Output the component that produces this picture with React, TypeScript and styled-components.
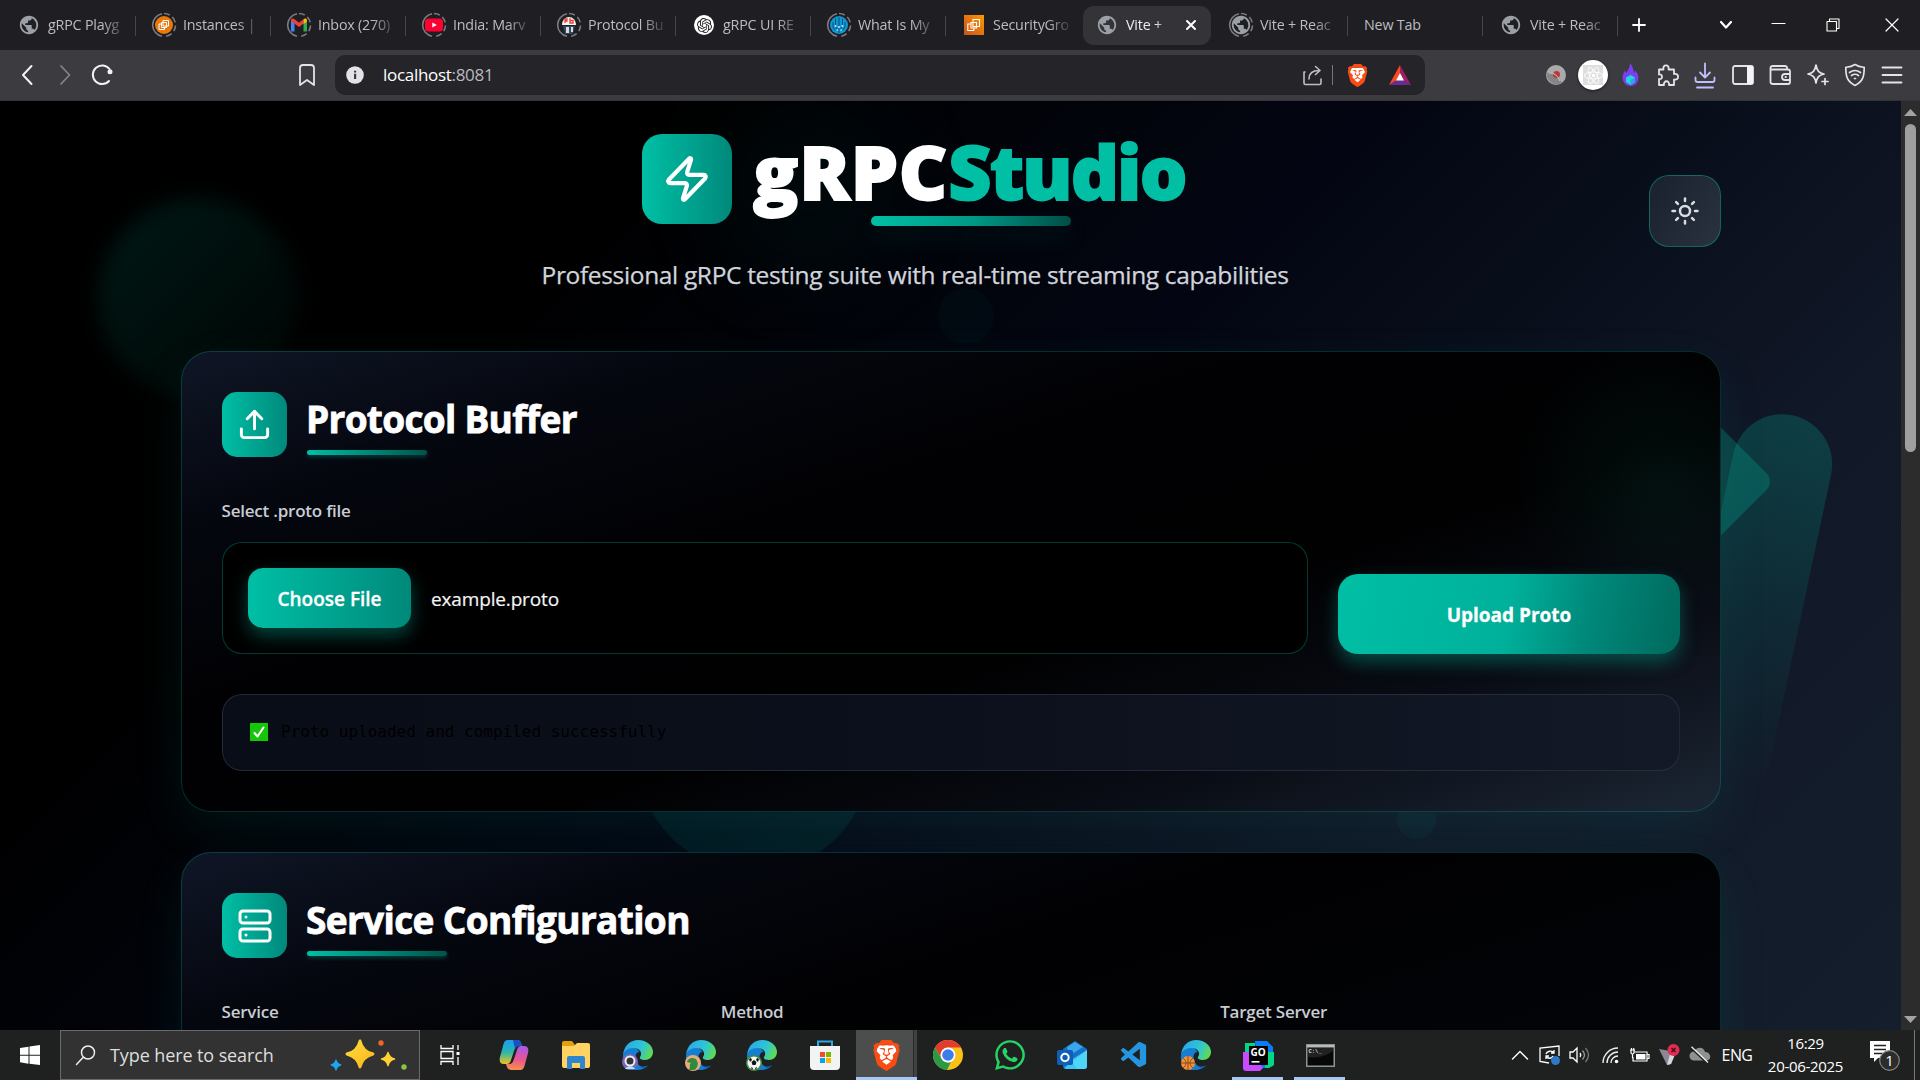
import React from "react";
import styled, { createGlobalStyle, css } from "styled-components";
import { Zap, Upload, Server, Sun } from "lucide-react";
import { SiBrave, SiOpenai } from "react-icons/si";
import { FaReact, FaWhatsapp } from "react-icons/fa";
import { MdPublic } from "react-icons/md";
import { VscVscode } from "react-icons/vsc";

const ui = `"Segoe UI", "Open Sans", "Noto Sans", sans-serif`;

const Global = createGlobalStyle`
  *, *::before, *::after { box-sizing: border-box; }
  body { margin: 0; background: #000; font-family: ${ui}; }
  svg { display: block; flex: none; }
`;

const Screen = styled.div`
  width: 1920px;
  height: 1080px;
  display: flex;
  flex-direction: column;
  overflow: hidden;
`;

/* ---------- browser chrome ---------- */

const TabStrip = styled.div`
  height: 50px;
  flex: none;
  display: flex;
  align-items: center;
  background: #1f1e23;
  padding-left: 1px;
`;

const Tab = styled.div<{ $active?: boolean; $line?: boolean }>`
  width: 135px;
  flex: none;
  height: 39px;
  display: flex;
  align-items: center;
  padding-left: ${(p) => (p.$active ? 11 : 15)}px;
  position: relative;
  ${(p) =>
    p.$active &&
    css`
      width: 128px;
      margin: 0 2px 0 2px;
      background: #343338;
      border-radius: 11px;
    `}
  ${(p) =>
    p.$line &&
    css`
      &::after {
        content: "";
        position: absolute;
        right: 0;
        top: 10px;
        width: 1px;
        height: 20px;
        background: #46454b;
      }
    `}
`;

const TabIcon = styled.span`
  width: 26px;
  height: 26px;
  display: grid;
  place-items: center;
  flex: none;
`;

const TabLabel = styled.span<{ $active?: boolean; $full?: boolean }>`
  width: ${(p) => (p.$active ? 44 : 80)}px;
  flex: none;
  margin-left: ${(p) => (p.$full ? 1 : 6)}px;
  white-space: nowrap;
  font-size: 14.3px;
  letter-spacing: -0.2px;
  line-height: 24px;
  color: ${(p) => (p.$active ? "#ededf0" : "#bdbcc2")};
  ${(p) =>
    !p.$full &&
    css`
      mask-image: linear-gradient(90deg, #000 68%, rgba(0, 0, 0, 0.15) 96%);
    `}
`;

const CloseBox = styled.span`
  margin-left: 15px;
`;

const WindowButtons = styled.div`
  flex: 1;
  height: 50px;
  display: flex;
  align-items: center;
  & > :first-child {
    margin-right: auto;
  }
`;

const WinBtn = styled.span<{ $w: number }>`
  width: ${(p) => p.$w}px;
  flex: none;
  display: flex;
  justify-content: center;
`;

const Toolbar = styled.div`
  height: 51px;
  flex: none;
  display: flex;
  align-items: center;
  background: #3c3b40;
  border-bottom: 1px solid #343338;
`;

const NavGroup = styled.div`
  width: 335px;
  display: flex;
  align-items: center;
  padding-left: 14px;
`;

const NavSlot = styled.span<{ $w: number; $push?: number }>`
  width: ${(p) => p.$w}px;
  margin-left: ${(p) => p.$push ?? 0}px;
  display: flex;
  justify-content: center;
`;

const AddressBar = styled.div`
  width: 1090px;
  height: 40px;
  border-radius: 10px;
  background: #252429;
  display: flex;
  align-items: center;
  padding: 0 13px 0 11px;
`;

const Url = styled.span`
  margin-left: 19px;
  flex: 1;
  font-size: 17px;
  letter-spacing: -0.3px;
  line-height: 24px;
  color: #b9b9bf;
  b {
    font-weight: 400;
    color: #fff;
  }
`;

const BarDivider = styled.span`
  width: 1px;
  height: 20px;
  background: #77767c;
  margin: 0 13px 0 8px;
`;

const Extensions = styled.div`
  flex: 1;
  display: flex;
  align-items: center;
  justify-content: flex-end;
  padding-right: 9px;
`;

const ExtSlot = styled.span`
  width: 37.4px;
  display: grid;
  place-items: center;
`;

const ReactBadge = styled.span`
  width: 30px;
  height: 30px;
  border-radius: 50%;
  background: #fff;
  display: grid;
  place-items: center;
  box-shadow: 0 1px 3px #0008;
`;

const ReactTile = styled.span`
  display: grid;
  place-items: center;
  width: 20px;
  height: 20px;
  background: #dedede;
`;

/* ---------- page ---------- */

const Viewport = styled.div`
  height: 929px;
  flex: none;
  display: flex;
`;

const Page = styled.main`
  width: 1901px;
  height: 929px;
  position: relative;
  overflow: hidden;
  background: linear-gradient(135deg, #000 0%, #000 24%, #030612 49%, #111827 76%, #141e2d 100%);
`;

const Shape = styled.div<{ $x: number; $y: number; $w: number; $h?: number }>`
  position: absolute;
  left: ${(p) => p.$x}px;
  top: ${(p) => p.$y}px;
  width: ${(p) => p.$w}px;
  height: ${(p) => p.$h ?? p.$w}px;
`;

const BlurOrb = styled(Shape)`
  border-radius: 50%;
  background: linear-gradient(135deg, rgba(0, 191, 165, 0.13), rgba(0, 137, 100, 0.03));
  filter: blur(10px);
`;

const Orb = styled(Shape)<{ $a: number }>`
  border-radius: 50%;
  background: rgba(0, 191, 165, ${(p) => p.$a});
`;

const Diamond = styled(Shape)`
  border-radius: 12px;
  transform: rotate(45deg);
  background: rgba(0, 191, 165, 0.25);
`;

const Pill = styled(Shape)`
  border-radius: 50px;
  transform: rotate(12deg);
  background: linear-gradient(180deg, rgba(0, 191, 165, 0.23), rgba(0, 137, 123, 0.15) 50%, rgba(0, 137, 123, 0) 92%);
`;

const Content = styled.div`
  position: relative;
  width: 1540px;
  margin-left: 181px;
`;

const Header = styled.header`
  height: 250px;
  display: flex;
  padding-top: 33px;
`;

const Hero = styled.div`
  flex: 1;
  display: flex;
  flex-direction: column;
  align-items: center;
`;

const Brand = styled.div`
  display: flex;
  gap: 20px;
`;

const IconTile = styled.div<{ $s: number; $r: number; $glow?: boolean }>`
  width: ${(p) => p.$s}px;
  height: ${(p) => p.$s}px;
  flex: none;
  border-radius: ${(p) => p.$r}px;
  background: linear-gradient(90deg, #00bfa5, #00897b);
  display: grid;
  place-items: center;
  color: #fff;
  ${(p) =>
    p.$glow &&
    css`
      box-shadow: 120px 10px 130px 30px rgba(0, 191, 165, 0.07);
    `}
`;

const Title = styled.h1`
  margin: 0;
  width: 436px;
  height: 92px;
  padding-left: 1px;
  font-size: 75px;
  font-weight: 800;
  line-height: 74px;
  letter-spacing: 0.75px;
  -webkit-text-stroke: 1.8px currentColor;
  color: #fff;
  white-space: nowrap;
  span {
    color: #00bfa5;
    letter-spacing: -1.85px;
  }
  &::after {
    content: "";
    display: block;
    width: 200px;
    height: 10px;
    margin: 8px auto 0;
    border-radius: 5px;
    background: linear-gradient(90deg, #00bfa5, #009a87 50%, #004d45);
    box-shadow: 0 12px 25px rgba(0, 191, 165, 0.12);
  }
`;

const Tagline = styled.p`
  margin: 31px 0 0;
  font-size: 24.5px;
  line-height: 36px;
  letter-spacing: -0.35px;
  -webkit-text-stroke: 0.25px currentColor;
  color: #d1d5db;
  white-space: nowrap;
`;

const ThemeToggle = styled.button`
  width: 72px;
  height: 72px;
  margin-top: 41px;
  padding: 0;
  border-radius: 20px;
  border: 1px solid rgba(0, 191, 165, 0.4);
  background: linear-gradient(120deg, #19212f, #2a3240);
  color: #d9dde3;
  display: grid;
  place-items: center;
`;

const Card = styled.section<{ $h: number; $glow?: boolean }>`
  height: ${(p) => p.$h}px;
  margin-bottom: 40px;
  padding: 40px;
  border: 1px solid rgba(0, 191, 165, 0.24);
  border-radius: 30px;
  background: ${(p) =>
    p.$glow
      ? "radial-gradient(circle at 1475px 130px, rgba(0, 120, 90, 0.11), transparent 140px), linear-gradient(162deg, #0f1626 0%, #05070f 18%, #010103 38%, #010102 60%, #090c14 78%, #1c2634 100%)"
      : "linear-gradient(162deg, #0f1626 0%, #05070f 18%, #010103 38%, #020306 60%, #05080f 100%)"};
  background-origin: border-box;
  box-shadow: 0 18px 50px rgba(0, 191, 165, 0.09);
`;

const CardHead = styled.div`
  display: flex;
  gap: 20px;
  height: 65px;
`;

const CardTitle = styled.h2<{ $bar: number; $ls: number }>`
  margin: 0;
  font-size: 37px;
  font-weight: 700;
  line-height: 50px;
  padding-top: 2px;
  color: #fff;
  white-space: nowrap;
  span {
    display: block;
    margin-left: -1px;
    letter-spacing: ${(p) => p.$ls}px;
    -webkit-text-stroke: 0.8px currentColor;
  }
  &::after {
    content: "";
    display: block;
    width: ${(p) => p.$bar}px;
    height: 5px;
    margin-top: 6px;
    border-radius: 3px;
    background: linear-gradient(90deg, #00bfa5, #00544b);
    box-shadow: 0 2px 4px rgba(0, 191, 165, 0.3);
  }
`;

const Label = styled.label`
  display: block;
  font-size: 17px;
  font-weight: 600;
  line-height: 26px;
  letter-spacing: -0.22px;
  margin-left: -0.5px;
  padding-top: 1px;
  color: #c8ccd3;
`;

const UploadRow = styled.div`
  display: grid;
  grid-template-columns: 1086px 342px;
  gap: 30px;
  align-items: end;
  margin-top: 40px;
`;

const FileBox = styled.div`
  height: 112px;
  margin-top: 18px;
  padding: 0 25px;
  border: 1px solid rgba(0, 191, 165, 0.3);
  border-radius: 20px;
  background: rgba(0, 0, 0, 0.85);
  display: flex;
  align-items: center;
  gap: 20px;
`;

const Button = styled.button<{ $w: number; $h: number; $big?: boolean }>`
  width: ${(p) => p.$w}px;
  height: ${(p) => p.$h}px;
  padding: 2px 0 0;
  border: 0;
  border-radius: ${(p) => (p.$big ? 20 : 15)}px;
  font-family: ${ui};
  font-size: 19px;
  font-weight: ${(p) => (p.$big ? 700 : 600)};
  letter-spacing: 0;
  -webkit-text-stroke: 0.3px currentColor;
  color: #fff;
  background: ${(p) =>
    p.$big
      ? "linear-gradient(100deg, #00bfa5, #00b09a 50%, #00897b 72%, #00695c)"
      : "linear-gradient(90deg, #00bfa5, #00897b)"};
  box-shadow: 0 8px 18px rgba(0, 191, 165, 0.36);
`;

const FileName = styled.span`
  font-size: 19px;
  letter-spacing: -0.15px;
  padding-top: 1px;
  -webkit-text-stroke: 0.2px currentColor;
  color: #f3f4f6;
`;

const Result = styled.div`
  margin-top: 40px;
  height: 77px;
  padding: 0 0 2px 27px;
  display: flex;
  align-items: center;
  border: 1px solid rgba(55, 65, 81, 0.5);
  border-radius: 20px;
  background: linear-gradient(90deg, #090d17, #0c101c 50%, #131927);
  color: #000;
  font-family: Consolas, "DejaVu Sans Mono", monospace;
  font-size: 16px;
`;

const Check = styled.span`
  width: 20px;
  height: 20px;
  border: 1px solid #04140a;
  margin: 0 12px 0 -1px;
  background: #16c60c;
  display: grid;
  place-items: center;
`;

const Fields = styled.div`
  display: grid;
  grid-template-columns: repeat(3, 1fr);
  gap: 40px;
  margin-top: 40px;
`;

/* ---------- scrollbar ---------- */

const Scrollbar = styled.div`
  width: 19px;
  background: #2c2c2c;
  display: flex;
  flex-direction: column;
  align-items: center;
  justify-content: space-between;
  padding: 8px 0 7px;
`;

const Track = styled.div`
  flex: 1;
  width: 11px;
  padding-top: 8px;
`;

const Thumb = styled.div`
  height: 328px;
  border-radius: 5.5px;
  background: #9f9f9f;
`;

/* ---------- taskbar ---------- */

const Taskbar = styled.footer`
  height: 50px;
  flex: none;
  display: flex;
  background: #1f2121;
`;

const StartSlot = styled.div`
  width: 60px;
  display: grid;
  place-items: center;
`;

const SearchBox = styled.div`
  width: 360px;
  border: 1px solid #6a6a6a;
  background: #323232;
  display: flex;
  align-items: center;
  padding-left: 14px;
`;

const SearchText = styled.span`
  flex: 1;
  margin-left: 14px;
  font-size: 18px;
  letter-spacing: -0.1px;
  color: #dedede;
`;

const Apps = styled.div`
  display: flex;
`;

const AppSlot = styled.div<{ $w?: number; $active?: boolean; $open?: boolean }>`
  width: ${(p) => p.$w ?? 62}px;
  display: grid;
  place-items: center;
  position: relative;
  ${(p) =>
    p.$active &&
    css`
      background: linear-gradient(90deg, #4c4d4d 57px, #2a2b2b 57px, #2a2b2b 58px, #404141 58px);
    `}
  ${(p) =>
    (p.$active || p.$open) &&
    css`
      &::after {
        content: "";
        position: absolute;
        bottom: 0;
        left: ${p.$active ? 0 : 5}px;
        right: ${p.$active ? 0 : 6}px;
        height: 3px;
        background: #a8c7f5;
      }
    `}
`;

const Tray = styled.div`
  flex: 1;
  display: flex;
  align-items: center;
  justify-content: flex-end;
  color: #fff;
`;

const TraySlot = styled.span<{ $w: number }>`
  width: ${(p) => p.$w}px;
  display: grid;
  place-items: center;
`;

const Lang = styled.span`
  width: 44px;
  text-align: center;
  font-size: 16px;
  letter-spacing: -0.6px;
`;

const Clock = styled.div`
  width: 93px;
  margin-right: 10px;
  text-align: center;
  font-size: 15px;
  line-height: 23px;
  letter-spacing: -0.3px;
`;

const EndLine = styled.span`
  width: 1px;
  height: 50px;
  background: #777;
  margin: 0 5px 0 8px;
`;

/* ---------- drawings ---------- */

const Favicon = ({ kind }: { kind: string }) => {
  if (kind === "globe") return <MdPublic size={22} color="#9aa0a6" />;
  return (
    <svg width="18" height="18" viewBox="0 0 18 18">
      {kind === "aws" && (
        <>
          <circle cx="9" cy="9" r="9" fill="#e8790c" />
          <path d="M8 4.500h5.500V10H8zM6.500 6.500h5v5h-5zM6 8H4v5.500h5.500V12" fill="none" stroke="#fff" strokeWidth="1" />
        </>
      )}
      {kind === "gmail" && (
        <g>
          <path d="M1 4v11.500h3.500V7z" fill="#4285f4" />
          <path d="M17 4v11.500h-3.500V7z" fill="#34a853" />
          <path d="M1 4.500C1 2.500 3 2 4.500 3.200L9 6.800l4.500-3.600V7.500L9 11 1 5z" fill="#ea4335" />
          <path d="M13.500 3.200C15 2 17 2.500 17 4.500L16.500 6l-3 2z" fill="#fbbc04" />
        </g>
      )}
      {kind === "yt" && (
        <>
          <rect x="0" y="2.500" width="18" height="13" rx="3.500" fill="#ff0033" />
          <path d="m7.300 6.500 4.500 2.500-4.500 2.500z" fill="#fff" />
        </>
      )}
      {kind === "pb" && (
        <>
          <path d="M2 9a7 8 0 0 1 14 0z" fill="#f6f4f2" />
          <path d="M5 7V3h2v2H5M10 2v5h3V4.500h-3" stroke="#e2402c" strokeWidth="1.300" fill="none" />
          <path d="M3 10h12l-2 8H5z" fill="#34495e" />
          <path d="M6 11h3v6H6zM11 11h2v5h-2z" fill="#d5dbe0" />
        </>
      )}
      {kind === "ip" && (
        <>
          <circle cx="9" cy="9" r="9" fill="#1296cf" />
          <path d="M9 1v16M5.500 2.500v8l2 3M12.500 2.500v8l-2 3M3 6v5l2 3M15 6v5l-2 3" stroke="#0a4f86" strokeWidth="1" fill="none" />
          <g fill="#bff0ff">
            <circle cx="9" cy="11" r="1" />
            <circle cx="5.500" cy="10" r="1" />
            <circle cx="12.500" cy="10" r="1" />
            <circle cx="7.500" cy="14" r=".8" />
            <circle cx="11" cy="14" r=".8" />
          </g>
        </>
      )}
    </svg>
  );
};

const RingBox = styled.span`
  display: grid;
  place-items: center;
  & > * {
    grid-area: 1 / 1;
  }
`;

const Ring = ({ children }: { children: React.ReactNode }) => (
  <RingBox>
    <svg width="26" height="26" viewBox="0 0 26 26">
      <path d="M11 1.700a11.500 11.500 0 0 0 0 22.600" fill="none" stroke="#7c7b80" strokeWidth="1.600" />
      <path d="M13 1.500a11.500 11.500 0 0 1 0 23" fill="none" stroke="#7c7b80" strokeWidth="1.600" strokeDasharray="6 3.200" />
    </svg>
    {children}
  </RingBox>
);

const AwsSquare = () => (
  <svg width="20" height="20" viewBox="0 0 20 20">
    <defs>
      <linearGradient id="awsg" x1="0" y1="1" x2="1" y2="0">
        <stop stopColor="#c8511b" />
        <stop offset="1" stopColor="#f90" />
      </linearGradient>
    </defs>
    <path fill="url(#awsg)" d="M0 0h20v20H0z" />
    <path d="M9 4.500h6.500v7H9zM7 7.500h5.500v5.500H7zM7 9H3.800v6.500h6V13" fill="none" stroke="#fff" strokeWidth="1.100" />
  </svg>
);

const OpenAiBadge = styled.span`
  width: 20px;
  height: 20px;
  border-radius: 50%;
  background: #fff;
  color: #222;
  display: grid;
  place-items: center;
`;

const BraveMark = ({ size }: { size: number }) => (
  <RingBox>
    <svg width={size} height={size} viewBox="0 0 24 24">
      <path d="M5.500 4h13l1.500 5-2 9-6 4.500L6 18 4 9z" fill="#fff" />
    </svg>
    <SiBrave size={size} color="#fb4a12" />
  </RingBox>
);

const Edge = ({ badge }: { badge: "astro" | "dino" | "soccer" | "basket" }) => (
  <svg width="32" height="32" viewBox="0 0 32 32">
    <defs>
      <linearGradient id={"ea" + badge} x1="0" x2="1" y1="0.3" y2="0.6">
        <stop stopColor="#29a8ea" />
        <stop offset=".6" stopColor="#2fc6d3" />
        <stop offset="1" stopColor="#62db4c" />
      </linearGradient>
    </defs>
    <path d="M1 16A15 15 0 0 0 27 26c-8 4-14-1-14-7 0-4 3-6 5-6C13 7 2 9 1 16z" fill="#1260b4" />
    <path d="M1 17C2 8 13 6 17 12c-4 1-5 8-1 13 2 3 4 4 6 4C10 35 0 27 1 17z" fill="#147fd2" />
    <path d="M1 16C2 6 9 1 16 1c9 0 15 6 15 12 0 5-4 8-8 8-3 0-6-1-5-3 3-4 0-9-7-9-5 0-9 3-10 7z" fill={`url(#ea${badge})`} />
    {badge === "astro" && (
      <>
        <circle cx="8" cy="23" r="8" fill="#7a63b8" />
        <path d="M3 30a6 6 0 0 1 10 0z" fill="#b5e8f4" />
        <circle cx="8" cy="22" r="4.500" fill="#333" stroke="#e8eef4" strokeWidth="2" />
      </>
    )}
    {badge === "dino" && (
      <>
        <circle cx="8" cy="24" r="8" fill="#e9ab80" />
        <path d="M3 31c4-2 0-5 3-7l-4-1c1-5 9-5 10-1 2 3 0 8-3 9z" fill="#2f8a3c" />
      </>
    )}
    {badge === "soccer" && (
      <>
        <circle cx="8" cy="24" r="8" fill="#3d8a43" />
        <circle cx="8" cy="24" r="6.500" fill="#f4f4f4" />
        <path d="m8 21 2.500 2-1 3h-3l-1-3zM3 20l2-1 1 2-2 2zM13 20l-2-1-1 2 2 2zM5 28l2 1-1 2zM11 28l-2 1 1 2z" fill="#111" />
      </>
    )}
    {badge === "basket" && (
      <>
        <circle cx="8" cy="24" r="7" fill="#ee9140" />
        <path d="M1 24h14M8 17v14M3 19c4 3 4 7 0 10M13 19c-4 3-4 7 0 10" stroke="#8d4a15" fill="none" />
      </>
    )}
  </svg>
);

const Star = ({ cx, cy, r, fill }: { cx: number; cy: number; r: number; fill: string }) => (
  <path
    d={`M${cx} ${cy - r}q${r * 0.2} ${r * 0.8} ${r} ${r}q${-r * 0.8} ${r * 0.2} ${-r} ${r}q${-r * 0.2} ${-r * 0.8} ${-r} ${-r}q${r * 0.8} ${-r * 0.2} ${r} ${-r}z`}
    fill={fill}
    stroke={fill}
    strokeWidth={r * 0.22}
    strokeLinejoin="round"
  />
);

const Line = ({ d, w = 22, h = 22, s = 1.8, c = "#e4e4e8" }: { d: string; w?: number; h?: number; s?: number; c?: string }) => (
  <svg width={w} height={h} viewBox={`0 0 ${w} ${h}`} fill="none" stroke={c} strokeWidth={s} strokeLinecap="round" strokeLinejoin="round">
    <path d={d} />
  </svg>
);

const CopilotIcon = () => (
  <svg width="30" height="30" viewBox="0 0 30 30">
    <defs>
      <linearGradient id="cp1" x1="0" y1="0" x2="0" y2="1">
        <stop stopColor="#1c9df0" />
        <stop offset=".5" stopColor="#28b5b0" />
        <stop offset="1" stopColor="#f1c41b" />
      </linearGradient>
      <linearGradient id="cp2" x1="0.5" y1="0" x2="0.4" y2="1">
        <stop stopColor="#a65ae8" />
        <stop offset=".55" stopColor="#e9568e" />
        <stop offset="1" stopColor="#f9904a" />
      </linearGradient>
    </defs>
    <path d="M9 0h9c3 0 4 2 5 6h-3c-3 0-4 2-5 5l-3 9c-1 3-2 4-4 4H5c-4 0-5-3-4-7l3-11C5 2 6 0 9 0z" fill="url(#cp1)" />
    <path d="M14 0h4c3 0 4 2 5 6h-3c-2 0-3 1-4 3z" fill="#1b4fc4" />
    <path d="M21 30h-9c-3 0-4-2-5-6h3c3 0 4-2 5-5l3-9c1-3 2-4 4-4h3c4 0 5 3 4 7l-3 11c-1 4-2 6-5 6z" fill="url(#cp2)" />
  </svg>
);

const ExplorerIcon = () => (
  <svg width="28" height="28" viewBox="0 0 28 28">
    <path d="M0 2q0-2 2-2h8l3 4v6H0z" fill="#e3a008" />
    <path d="M0 5h12l3-3h11q2 0 2 2v21q0 2-2 2H2q-2 0-2-2z" fill="#ffd262" />
    <path d="M5 28V17q0-2 2-2h14q2 0 2 2v11h-5v-6h-8v6z" fill="#2f86d0" />
  </svg>
);

const StoreIcon = () => (
  <svg width="30" height="32" viewBox="0 0 30 32">
    <path d="M8 7V2.500h14V7" fill="none" stroke="#2aa8e0" strokeWidth="2" />
    <path d="M0 7h30v20q0 4-4 4H4q-4 0-4-4z" fill="#f3f3f3" />
    <path d="M10 13h5v5h-5z" fill="#f04e23" />
    <path d="M16 13h5v5h-5z" fill="#7db700" />
    <path d="M10 19h5v5h-5z" fill="#00a3ee" />
    <path d="M16 19h5v5h-5z" fill="#fdb900" />
  </svg>
);

const ChromeIcon = () => (
  <svg width="30" height="30" viewBox="0 0 30 30">
    <circle cx="15" cy="15" r="15" fill="#fbc116" />
    <path d="M2 7.500A15 15 0 0 1 28 7.500H15A7.500 7.500 0 0 0 8.500 18.700z" fill="#e33b2e" />
    <path d="M2 7.500 8.500 18.700A7.500 7.500 0 0 0 18 21.900L14 30A15 15 0 0 1 2 7.500z" fill="#2a9a49" />
    <circle cx="15" cy="15" r="7.500" fill="#fff" />
    <circle cx="15" cy="15" r="5.800" fill="#3b7ded" />
  </svg>
);

const OutlookIcon = () => (
  <svg width="30" height="28" viewBox="0 0 30 28">
    <path d="M6 8 18 0l12 8v17q0 3-3 3H9q-3 0-3-3z" fill="#1470c8" />
    <path d="M10 6 18 1l8 5-14 9z" fill="#3ba6ea" />
    <path d="M30 9v16q0 3-3 3H9l-2-1z" fill="#3cc8f4" />
    <path d="M30 9 14 19l6 9h7q3 0 3-3z" fill="#52dcfa" opacity=".7" />
    <rect y="9" width="16" height="15" rx="2" fill="#0f5fb8" />
    <circle cx="8" cy="16.500" r="3.700" fill="none" stroke="#fff" strokeWidth="2" />
  </svg>
);

const GoText = styled.text`
  font: 700 10px "Open Sans", sans-serif;
  fill: #fff;
`;

const GolandIcon = () => (
  <svg width="31" height="31" viewBox="0 0 31 31">
    <path d="M2 3h10v10H2z" fill="#00d886" />
    <path d="M12 1h12l6 6v18l-4 3H14z" fill="#087cfa" />
    <path d="M24 12h7v13l-5 3h-4z" fill="#00d886" />
    <path d="M0 12h8l12 16-3 3H3q-3 0-3-3z" fill="#c94bff" />
    <path d="M6 6h19v19H6z" fill="#000" />
    <GoText x="7.5" y="15.5">GO</GoText>
    <path d="M8.500 21h8v1.600h-8z" fill="#fff" />
  </svg>
);

const CmdText = styled.text`
  font: 700 5.5px "Liberation Mono", monospace;
  fill: #ddd;
`;

const CmdIcon = () => (
  <svg width="29" height="23" viewBox="0 0 29 23">
    <path d="M.75.75h27.500v21.500H.75z" fill="#070707" stroke="#8d9296" strokeWidth="1.500" />
    <path d="M1 1h27v2.500H1z" fill="#b6babd" />
    <path d="M2 13q14 2 25-6V4H2z" fill="#333" opacity=".6" />
    <CmdText x="2.5" y="9">C:\_</CmdText>
  </svg>
);

const tabs: { icon: React.ReactNode; label: string; active?: boolean; line?: boolean }[] = [
  { icon: <Favicon kind="globe" />, label: "gRPC Playg", line: true },
  { icon: <Ring><Favicon kind="aws" /></Ring>, label: "Instances |", line: true },
  { icon: <Ring><Favicon kind="gmail" /></Ring>, label: "Inbox (270)", line: true },
  { icon: <Ring><Favicon kind="yt" /></Ring>, label: "India: Marv", line: true },
  { icon: <Ring><Favicon kind="pb" /></Ring>, label: "Protocol Bu", line: true },
  { icon: <OpenAiBadge><SiOpenai size={15} /></OpenAiBadge>, label: "gRPC UI RE", line: true },
  { icon: <Ring><Favicon kind="ip" /></Ring>, label: "What Is My", line: true },
  { icon: <AwsSquare />, label: "SecurityGro" },
  { icon: <Favicon kind="globe" />, label: "Vite +", active: true },
  { icon: <Ring><Favicon kind="globe" /></Ring>, label: "Vite + Reac", line: true },
  { icon: null, label: "New Tab", line: true },
  { icon: <Favicon kind="globe" />, label: "Vite + Reac", line: true },
];

const BrowserTabs = () => (
  <TabStrip>
    {tabs.map((t, i) => (
      <Tab key={i} $active={t.active} $line={t.line}>
        {t.icon && <TabIcon>{t.icon}</TabIcon>}
        <TabLabel $active={t.active} $full={!t.icon}>
          {t.label}
        </TabLabel>
        {t.active && (
          <CloseBox>
            <Line w={12} h={12} d="M2 2l8 8M10 2l-8 8" s={2} c="#fff" />
          </CloseBox>
        )}
      </Tab>
    ))}
    <WindowButtons>
      <WinBtn $w={42}><Line w={16} h={16} d="M8 2v12M2 8h12" c="#fff" /></WinBtn>
      <WinBtn $w={56}><Line w={16} h={12} d="M3 3l5 5.500L13 3" s={2.2} c="#fff" /></WinBtn>
      <WinBtn $w={48}><Line w={15} h={15} d="M1 5.500h13" s={1.2} c="#fff" /></WinBtn>
      <WinBtn $w={62}><Line w={14} h={14} d="M1 3.500h9.500V13H1zM3.500 3.500V1H13v9.500h-2.500" s={1.1} c="#fff" /></WinBtn>
      <WinBtn $w={56}><Line w={14} h={14} d="M1 1l12 12M13 1L1 13" s={1.2} c="#fff" /></WinBtn>
    </WindowButtons>
  </TabStrip>
);

const BrowserToolbar = () => (
  <Toolbar>
    <NavGroup>
      <NavSlot $w={26}><Line w={14} h={22} d="M11.500 2 3 11l8.500 9" s={2} c="#f2f2f4" /></NavSlot>
      <NavSlot $w={26} $push={12}><Line w={14} h={22} d="M3 2l8.500 9L3 20" s={1.7} c="#85848a" /></NavSlot>
      <NavSlot $w={26} $push={11}>
        <svg width="24" height="24" viewBox="0 0 24 24" fill="none" stroke="#f2f2f4" strokeWidth="2" strokeLinecap="round">
          <path d="M19.500 6A9.300 9.300 0 1 0 19 18" />
          <circle cx="20" cy="8.800" r="2.500" fill="#f2f2f4" stroke="none" />
        </svg>
      </NavSlot>
      <NavSlot $w={26} $push={179}><Line w={18} h={24} d="M2 5q0-3 3-3h8q3 0 3 3v17l-7-5-7 5z" /></NavSlot>
    </NavGroup>
    <AddressBar>
      <svg width="18" height="18" viewBox="0 0 18 18">
        <circle cx="9" cy="9" r="8.800" fill="#e3e3e6" />
        <path d="M8 7.800h2.200V13H8zM8 4.700h2.200v1.900H8z" fill="#3c3b40" />
      </svg>
      <Url><b>localhost</b>:8081</Url>
      <Line w={22} h={22} s={1.6} c="#bfbec4" d="M3 8H2v11q0 1.500 1.500 1.500h14q1.500 0 1.500-1.500v-4M7 15c0-6 4-8.500 10-8.500M13.500 2.500 18 6.500l-4.500 4" />
      <BarDivider />
      <BraveMark size={23} />
      <NavSlot $w={24} $push={19}>
        <svg width="22" height="20" viewBox="0 0 22 20">
          <path d="M11 0 0 20l7.500-4.500L11 8z" fill="#ff4724" />
          <path d="M11 0l11 20-7.500-4.500L11 8z" fill="#9e1f63" />
          <path d="M0 20h22l-7.500-5h-7z" fill="#662d91" />
          <path d="m11 8 4 7.500H7z" fill="#fff" />
        </svg>
      </NavSlot>
    </AddressBar>
    <Extensions>
      <ExtSlot>
        <svg width="20" height="20" viewBox="0 0 20 20">
          <circle cx="10" cy="10" r="10" fill="#aaa" />
          <path d="M1 8q9-3 15 10a10 10 0 0 1-15-10z" fill="#858585" />
          <circle cx="10.500" cy="9.500" r="3.500" fill="#b63c3c" />
          <path d="M3 8q7-1 11 8" stroke="#ccc" fill="none" />
        </svg>
      </ExtSlot>
      <ExtSlot><ReactBadge><ReactTile><FaReact size={19} color="#fff" /></ReactTile></ReactBadge></ExtSlot>
      <ExtSlot>
        <svg width="17" height="24" viewBox="0 0 17 24">
          <path d="M8 0c3.500 4 3 7 4.500 10l1-2.500c2 2.500 3 5 3 7.500a8 8 0 0 1-16 0c0-3 1-5 2.500-7.500L4 10C6.500 7 8 4 8 0z" fill="#7a3ff2" />
          <path d="m8.500 12 4.500 2.500v4.500l-4.500 3L4 19v-4.500z" fill="#20d9d0" />
          <path d="m8.500 17 4.500-2.500v4.500l-4.500 3z" fill="#28a7f0" />
        </svg>
      </ExtSlot>
      <ExtSlot><Line w={24} h={24} d="M3 6.500h4.500C6 1 14 1 12.500 6.500H18V11c5.500-1.500 5.500 7 0 5.500V22h-5c1-5-6-5-5 0H3v-6c4 1 4-5.500 0-4.500z" /></ExtSlot>
      <ExtSlot><Line w={22} h={28} c="#c1bdff" d="M11 2.500V16M6 11.500l5 5 5-5M1.500 16.500V19q0 2 2 2h15q2 0 2-2v-2.500M3 26.500h16" /></ExtSlot>
      <ExtSlot>
        <svg width="22" height="20" viewBox="0 0 22 20">
          <rect x="1" y="1" width="20" height="18" rx="2" fill="none" stroke="#e4e4e8" strokeWidth="1.800" />
          <path d="M15 1h6v18h-6z" fill="#f4f4f6" />
        </svg>
      </ExtSlot>
      <ExtSlot><Line w={23} h={22} d="M18 5.500V3.500Q18 2 16 2H4Q1.500 2 1.500 4T4 5.500h15q2 0 2 2V18q0 2-2 2H4q-2.500 0-2.500-2V4M21 10h-5q-3 0-3 3t3 3h5zM16.500 13h.5" /></ExtSlot>
      <ExtSlot><Line w={24} h={24} s={1.7} d="M10 2c1 6 3 8 8 9-5 1-7 3-8 9-1-6-3-8-8-9 5-1 7-3 8-9zM19 15.500v6M16 18.500h6" /></ExtSlot>
      <ExtSlot><Line w={22} h={24} s={1.7} d="M11 1.500C7 4 5 4 1.800 4.300c0 9 1 14 9.200 18.200 8.200-4.200 9.200-9.200 9.200-18.200C17 4 15 4 11 1.500zM5.500 9.500q5.500-4 11 0M7.500 12.500q3.500-2.500 7 0M10.500 15.500h1" /></ExtSlot>
      <ExtSlot><Line w={22} h={20} d="M1.500 2.500h19M1.500 10h19M1.500 17.500h19" /></ExtSlot>
    </Extensions>
  </Toolbar>
);

const BadgeText = styled.text`
  font: 400 15px "Open Sans", sans-serif;
  fill: #fff;
  text-anchor: middle;
`;

const Desktop = () => (
  <Taskbar>
    <StartSlot>
      <svg width="20" height="20" viewBox="0 0 20 20" fill="#fff">
        <path d="M0 3l8.500-1.300v8H0zM9.500 1.500 20 0v9.700H9.500zM0 10.700h8.500v8L0 17.300zM9.500 10.700H20V20L9.500 18.700z" />
      </svg>
    </StartSlot>
    <SearchBox>
      <Line w={21} h={21} s={1.5} c="#eee" d="M19.500 7.500a6.500 6.500 0 1 1-13 0 6.500 6.500 0 0 1 13 0zM8 12.500 1.500 19.500" />
      <SearchText>Type here to search</SearchText>
      <svg width="90" height="48" viewBox="0 0 90 48">
        <defs>
          <linearGradient id="gold" x1="0" y1="0" x2="1" y2="1">
            <stop stopColor="#ffdc3c" />
            <stop offset="1" stopColor="#fbb51c" />
          </linearGradient>
        </defs>
        <Star cx={31} cy={23} r={13} fill="url(#gold)" />
        <Star cx={59} cy={28} r={6.5} fill="#ffd034" />
        <Star cx={7} cy={34} r={5} fill="#1da6f2" />
        <circle cx="52" cy="12" r="2.700" fill="#f0642d" />
        <circle cx="75" cy="36" r="2.700" fill="#8bc540" />
      </svg>
    </SearchBox>
    <Apps>
      <AppSlot $w={60}>
        <svg width="20" height="20" viewBox="0 0 20 20" fill="none" stroke="#fff" strokeWidth="1.300">
          <path d="M1 0v3.500h12V0M1 20v-3.500h12V20M1 6.500h12v7H1zM18 0v5M18 12v8" />
          <path d="M16.500 7h3v3h-3z" fill="#fff" stroke="none" />
        </svg>
      </AppSlot>
      <AppSlot $w={68}><CopilotIcon /></AppSlot>
      <AppSlot $w={55}><ExplorerIcon /></AppSlot>
      <AppSlot $w={70}><Edge badge="astro" /></AppSlot>
      <AppSlot $w={56}><Edge badge="dino" /></AppSlot>
      <AppSlot $w={66}><Edge badge="soccer" /></AppSlot>
      <AppSlot $w={59}><StoreIcon /></AppSlot>
      <AppSlot $w={2} />
      <AppSlot $w={61} $active><BraveMark size={31} /></AppSlot>
      <AppSlot $w={62}><ChromeIcon /></AppSlot>
      <AppSlot><FaWhatsapp size={34} color="#25d366" /></AppSlot>
      <AppSlot><OutlookIcon /></AppSlot>
      <AppSlot><VscVscode size={31} color="#2496e0" /></AppSlot>
      <AppSlot><Edge badge="basket" /></AppSlot>
      <AppSlot $open><GolandIcon /></AppSlot>
      <AppSlot $open><CmdIcon /></AppSlot>
    </Apps>
    <Tray>
      <TraySlot $w={30}><Line w={18} h={12} s={1.4} c="#fff" d="M1.500 10 9 2.500l7.500 7.500" /></TraySlot>
      <TraySlot $w={30}>
        <svg width="22" height="20" viewBox="0 0 22 20" fill="none" stroke="#fff" strokeWidth="1.300">
          <path d="M10 18 1 16.500V3L20 1v10M7 9c1-3 6-4 8-1m0-3v3h-3M14 11c-1 3-6 3-7 0m0 3v-3h3" />
          <circle cx="16.500" cy="15.500" r="4.500" fill="#2f78c8" stroke="none" />
        </svg>
      </TraySlot>
      <TraySlot $w={30}>
        <svg width="22" height="18" viewBox="0 0 22 18" fill="none" stroke="#fff" strokeWidth="1.300">
          <path d="M1 6h3l4-4v14l-4-4H1zM11 7q1.500 2 0 4" />
          <path d="M13.500 4.500q4 4.500 0 9" stroke="#999" />
          <path d="M16.500 2q6 7 0 14" stroke="#777" />
        </svg>
      </TraySlot>
      <TraySlot $w={31}>
        <svg width="17" height="17" viewBox="0 0 17 17" fill="none" stroke="#eee" strokeWidth="1.400">
          <path d="M1 16A15 15 0 0 1 16 1M5 16A11 11 0 0 1 16 5M9 16a7 7 0 0 1 7-7" />
          <circle cx="14.500" cy="14.500" r="1.800" fill="#fff" stroke="none" />
        </svg>
      </TraySlot>
      <TraySlot $w={27}>
        <svg width="21" height="15" viewBox="0 0 21 15" fill="none" stroke="#fff" strokeWidth="1.200">
          <path d="M5 4h13v9H4V9M18 6.500h2v4h-2M1 2h5M2 2v3q1.500 2 3 0V2M2.500 0v2M4.700 0v2M3.500 6v4" />
          <path d="M7 6h9.500v5.500H7z" fill="#fff" stroke="none" />
        </svg>
      </TraySlot>
      <TraySlot $w={32}>
        <svg width="22" height="22" viewBox="0 0 22 22">
          <path d="M1 5l8 16 4-1 5-12z" fill="#8a8894" />
          <path d="m9 21 4-1 5-12-6 2z" fill="#d8d6de" />
          <circle cx="15.500" cy="6" r="6" fill="#e02d50" />
          <path d="m13.500 4 4 4m0-4-4 4" stroke="#48101c" strokeWidth="1.600" />
        </svg>
      </TraySlot>
      <TraySlot $w={30}>
        <svg width="22" height="18" viewBox="0 0 22 18">
          <path d="M5 14.500a4.500 4.500 0 0 1 0-9C8 0 15 1 16 6c6.500 0 7 8.500 1 8.500z" fill="#909090" />
          <path d="M2.500 2.300 18 17" stroke="#1f2121" strokeWidth="1.800" />
          <path d="M2.500.8 19 16.500" stroke="#eee" strokeWidth="1.300" />
        </svg>
      </TraySlot>
      <Lang>ENG</Lang>
      <Clock>
        16:29
        <br />
        20-06-2025
      </Clock>
      <TraySlot $w={44}>
        <svg width="32" height="34" viewBox="0 0 32 34">
          <path d="M2 3h20v17H10l-4 4v-4H2z" fill="#fff" />
          <path d="M6 7.500h12M6 11.500h12M6 15.500h9" stroke="#1f2121" strokeWidth="1.300" />
          <circle cx="21.500" cy="22.500" r="9.800" fill="#2c2c2c" stroke="#858585" strokeWidth="1.200" />
          <BadgeText x="21.500" y="28">1</BadgeText>
        </svg>
      </TraySlot>
      <EndLine />
    </Tray>
  </Taskbar>
);

export default function App() {
  return (
    <Screen>
      <Global />
      <BrowserTabs />
      <BrowserToolbar />
      <Viewport>
        <Page>
          <BlurOrb $x={98} $y={97} $w={200} />
          <Orb $x={938} $y={187} $w={56} $a={0.035} />
          <Diamond $x={1595} $y={306} $w={149} />
          <Pill $x={1701} $y={310} $w={100} $h={400} />
          <Orb $x={637} $y={537} $w={234} $a={0.09} />
          <Orb $x={1397} $y={699} $w={39} $a={0.05} />
          <Content>
            <Header>
              <Hero>
                <Brand>
                  <IconTile $s={90} $r={20} $glow>
                    <Zap size={50} strokeWidth={2} />
                  </IconTile>
                  <Title>
                    gRPC<span>Studio</span>
                  </Title>
                </Brand>
                <Tagline>Professional gRPC testing suite with real-time streaming capabilities</Tagline>
              </Hero>
              <ThemeToggle aria-label="Toggle theme">
                <Sun size={30} strokeWidth={2} />
              </ThemeToggle>
            </Header>

            <Card $h={461} $glow>
              <CardHead>
                <IconTile $s={65} $r={15}>
                  <Upload size={35} strokeWidth={2} />
                </IconTile>
                <CardTitle $bar={120} $ls={-0.7}><span>Protocol Buffer</span></CardTitle>
              </CardHead>
              <UploadRow>
                <div>
                  <Label>Select .proto file</Label>
                  <FileBox>
                    <Button $w={163} $h={60}>Choose File</Button>
                    <FileName>example.proto</FileName>
                  </FileBox>
                </div>
                <Button $w={342} $h={80} $big>Upload Proto</Button>
              </UploadRow>
              <Result>
                <Check>
                  <Line w={14} h={14} d="M2.500 8 5.500 11.500 11.500 2.500" s={2} c="#fff" />
                </Check>
                Proto uploaded and compiled successfully
              </Result>
            </Card>

            <Card $h={460}>
              <CardHead>
                <IconTile $s={65} $r={15}>
                  <Server size={36} strokeWidth={2} />
                </IconTile>
                <CardTitle $bar={140} $ls={-0.64}><span>Service Configuration</span></CardTitle>
              </CardHead>
              <Fields>
                <Label>Service</Label>
                <Label>Method</Label>
                <Label>Target Server</Label>
              </Fields>
            </Card>
          </Content>
        </Page>
        <Scrollbar>
          <svg width="13" height="7" viewBox="0 0 13 7"><path d="M6.500 0 13 7H0z" fill="#a3a3a3" /></svg>
          <Track><Thumb /></Track>
          <svg width="13" height="7" viewBox="0 0 13 7"><path d="M6.500 7 13 0H0z" fill="#a3a3a3" /></svg>
        </Scrollbar>
      </Viewport>
      <Desktop />
    </Screen>
  );
}
